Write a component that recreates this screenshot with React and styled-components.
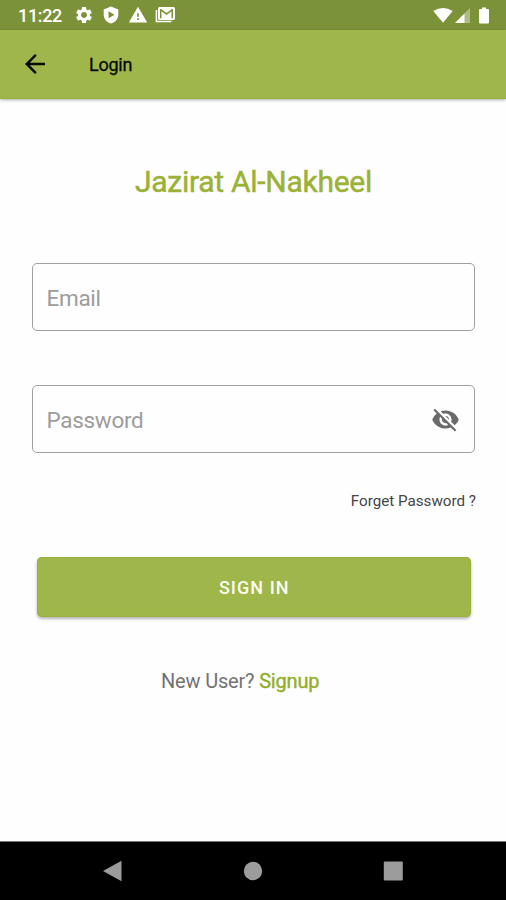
import React from "react";
import styled, { createGlobalStyle } from "styled-components";
import { MdSettings, MdWarning, MdVisibilityOff, MdArrowBack } from "react-icons/md";

const GlobalStyle = createGlobalStyle`
  *, *::before, *::after { box-sizing: border-box; }
  body { margin: 0; background: #fefefe; font-family: Roboto, "Noto Sans", sans-serif; }
  button, input { font-family: inherit; }
`;

const Screen = styled.div`
  display: flex;
  flex-direction: column;
  width: 506px;
  height: 900px;
  overflow: hidden;
  background: #fefefe;
`;

const StatusBar = styled.div`
  display: flex;
  align-items: center;
  justify-content: space-between;
  flex: none;
  height: 30px;
  padding: 0 17px 0 18px;
  background: #7c9239;
  color: #fff;
`;

const StatusGroup = styled.div`
  display: flex;
  align-items: center;
  height: 30px;
`;

const Time = styled.span`
  width: 56px;
  font-size: 18px;
  line-height: 30px;
  padding-top: 1px;
  font-weight: 500;
  letter-spacing: -0.35px;
`;

const StatusIcon = styled.svg`
  display: block;
  flex: none;
  width: ${(p) => p.$w}px;
  height: ${(p) => p.$h}px;
  margin-left: ${(p) => p.$gap || 0}px;
  fill: currentColor;
`;

const AppBar = styled.header`
  display: flex;
  align-items: center;
  flex: none;
  height: 69px;
  padding-left: 20px;
  background: #9fb74a;
  border-bottom: 1px solid #97b136;
  box-shadow: 0 1px 3px rgba(0, 0, 0, 0.32);
  color: #080a02;
`;

const BackButton = styled.button`
  display: flex;
  width: 30px;
  height: 30px;
  padding: 0;
  border: 0;
  background: none;
  color: inherit;
`;

const BarTitle = styled.h1`
  margin: 2px 0 0 39px;
  font-size: 18px;
  line-height: 24px;
  font-weight: 400;
  letter-spacing: -0.25px;
  -webkit-text-stroke: 0.3px currentColor;
`;

const Content = styled.main`
  display: flex;
  flex-direction: column;
  flex: 1;
  padding: 63px 31px 0 32px;
`;

const Brand = styled.h2`
  margin: 0;
  align-self: center;
  font-size: 30px;
  line-height: 40px;
  font-weight: 400;
  letter-spacing: -0.27px;
  -webkit-text-stroke: 0.5px currentColor;
  color: #9bb237;
`;

const Field = styled.label`
  display: flex;
  align-items: center;
  flex: none;
  height: ${(p) => p.$height}px;
  margin-top: ${(p) => p.$gap}px;
  padding: 0 14px 0 13.5px;
  border: 1px solid #a0a0a0;
  border-radius: 5px;
  color: #6a6a6a;
`;

const Input = styled.input`
  flex: 1;
  min-width: 0;
  height: 40px;
  padding: 2px 0 0;
  border: 0;
  outline: 0;
  background: transparent;
  font-size: 22.5px;
  letter-spacing: -0.3px;
  color: #555;
  &::placeholder { color: #9c9c9c; opacity: 1; }
`;

const ForgotLink = styled.a`
  align-self: flex-end;
  margin: 37px -1px 0 0;
  font-size: 15.2px;
  line-height: 22px;
  color: #454545;
`;

const SignInButton = styled.button`
  height: 60px;
  flex: none;
  margin: 45px 4.5px 0 5px;
  padding: 0 0 0 1px;
  border: 0;
  border-radius: 5px;
  background: #9fb74a;
  box-shadow: 0 2px 3px rgba(40, 40, 60, 0.34), inset 0 0 1px 1px #98b23a;
  color: #fafcf0;
  font-size: 18px;
  font-weight: 500;
  letter-spacing: 1.05px;
`;

const SignupLine = styled.p`
  margin: 50px 0 0 129px;
  font-size: 20px;
  line-height: 28px;
  letter-spacing: -0.18px;
  color: #737373;
  white-space: nowrap;
`;

const SignupLink = styled.a`
  color: #94ae2b;
  -webkit-text-stroke: 0.4px currentColor;
`;

const NavBar = styled.nav`
  display: flex;
  align-items: center;
  justify-content: space-between;
  flex: none;
  height: 59px;
  padding: 0 103px 0 102px;
  border-top: 1px solid #777;
  background: #000;
`;

const NavIcon = styled.svg`
  width: 20px;
  height: 22px;
  fill: #9c9c9c;
`;

export default function App() {
  return (
    <Screen>
      <GlobalStyle />
      <StatusBar>
        <StatusGroup>
          <Time>11:22</Time>
          <StatusIcon as={MdSettings} $w={20} $h={20} />
          <StatusIcon viewBox="0 0 16 18" $w={16} $h={18} $gap={9}>
            <path fillRule="evenodd" d="M8 0.5 15.3 3.5V8.5C15.3 13 12.2 16.4 8 17.6 3.8 16.4.7 13 .7 8.5V3.5ZM5.5 5.2V12.3L11.5 8.8Z" />
          </StatusIcon>
          <StatusIcon as={MdWarning} $w={20} $h={20} $gap={9} />
          <StatusIcon viewBox="0 0 20 16" $w={20} $h={16} $gap={7}>
            <path d="M1.4 3V14.6H16.5" fill="none" stroke="currentColor" strokeWidth="1.5" />
            <path fillRule="evenodd" d="M4.5 0H18.5Q20 0 20 1.5V11.5Q20 13 18.5 13H4.5Q3 13 3 11.5V1.5Q3 0 4.5 0ZM5 2V11.3H6.5V4.3L11.5 8 16.5 4.3V11.3H18V2H17L11.5 5.9 6 2Z" />
            <path d="M7.6 11.3V7L11.5 9.7 15.4 7V11.3Z" opacity=".35" />
          </StatusIcon>
        </StatusGroup>
        <StatusGroup>
          <StatusIcon viewBox="0 0 20 15" $w={20} $h={15}>
            <path d="M0.3 3.1Q10-3 19.7 3.1L10 14.7Z" />
          </StatusIcon>
          <StatusIcon viewBox="0 0 15 15" $w={15} $h={15} $gap={2}>
            <path d="M15 0V15H0Z" opacity=".38" />
            <path d="M9.5 5.5V15H0Z" />
          </StatusIcon>
          <StatusIcon viewBox="0 0 10 17" $w={10} $h={17} $gap={9}>
            <path d="M3 0.5H7V2H9Q10 2 10 3V15.5Q10 16.5 9 16.5H1Q0 16.5 0 15.5V3Q0 2 1 2H3Z" />
          </StatusIcon>
        </StatusGroup>
      </StatusBar>
      <AppBar>
        <BackButton aria-label="Back"><MdArrowBack size={30} /></BackButton>
        <BarTitle>Login</BarTitle>
      </AppBar>
      <Content>
        <Brand>Jazirat Al-Nakheel</Brand>
        <Field $height={68} $gap={61}>
          <Input type="email" placeholder="Email" />
        </Field>
        <Field $height={68} $gap={54}>
          <Input type="password" placeholder="Password" />
          <MdVisibilityOff size={29} />
        </Field>
        <ForgotLink>Forget Password ?</ForgotLink>
        <SignInButton>SIGN IN</SignInButton>
        <SignupLine>New User? <SignupLink>Signup</SignupLink></SignupLine>
      </Content>
      <NavBar>
        <NavIcon viewBox="0 0 20 22"><path d="M19.5 .8V21.2L1 11Z" /></NavIcon>
        <NavIcon viewBox="0 0 20 22"><circle cx="10" cy="11" r="9.2" /></NavIcon>
        <NavIcon viewBox="0 0 20 22"><rect x=".8" y="1.5" width="19" height="19" rx="1" /></NavIcon>
      </NavBar>
    </Screen>
  );
}
